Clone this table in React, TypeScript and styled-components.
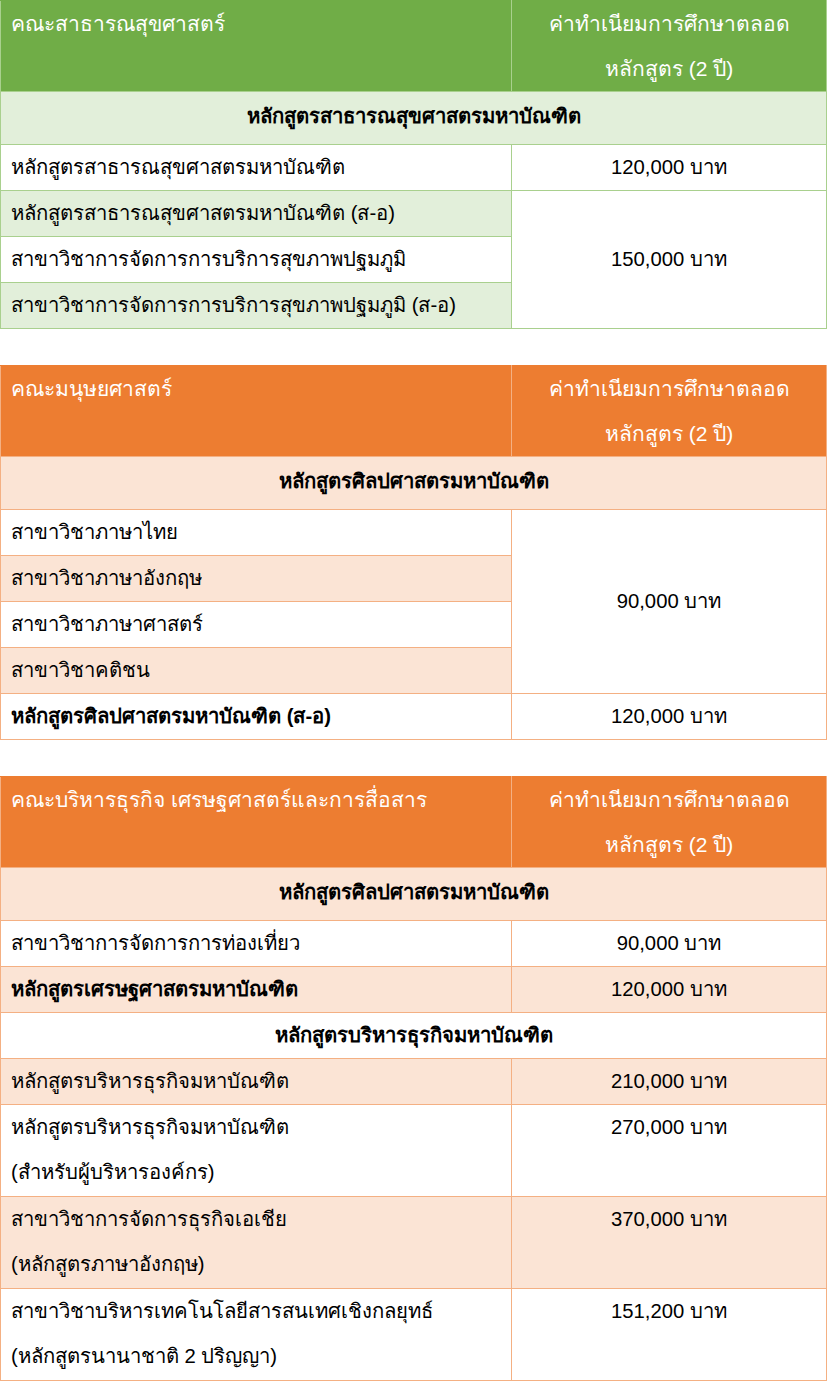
import React from 'react';
import styled, { createGlobalStyle, css } from 'styled-components';

type Tone = 'green' | 'orange';

const palettes: Record<Tone, { head: string; light: string; line: string }> = {
  green: { head: '#70AD47', light: '#E2EFDA', line: '#A9D08E' },
  orange: { head: '#ED7D31', light: '#FBE4D5', line: '#F4B083' },
};

const GlobalStyle = createGlobalStyle`
  body {
    margin: 0;
    background: #fff;
    font-family: Tahoma, "Liberation Sans", "Noto Sans", sans-serif;
    color: #000;
  }
`;

const Page = styled.div`
  width: 827px;
  display: flex;
  flex-direction: column;
  gap: 36px;
`;

const Table = styled.table`
  width: 100%;
  border-collapse: collapse;
  table-layout: fixed;
  font-size: 20.3px;
`;

const HeadCell = styled.th<{ $tone: Tone; $center?: boolean }>`
  background: ${(p) => palettes[p.$tone].head};
  color: #fff;
  font-weight: normal;
  font-size: 21px;
  text-align: ${(p) => (p.$center ? 'center' : 'left')};
  vertical-align: top;
  line-height: 45px;
  padding: 0 10px;
  border: 1px solid ${(p) => palettes[p.$tone].line};
  border-top-color: ${(p) => palettes[p.$tone].head};
`;

const GroupCell = styled.td<{ $tone: Tone; $shade?: boolean; $tall?: boolean }>`
  background: ${(p) => (p.$shade ? palettes[p.$tone].light : '#fff')};
  font-weight: bold;
  text-align: center;
  line-height: 45px;
  padding: ${(p) => (p.$tall ? '2px 10px 5px' : '0 10px')};
  border: 1px solid ${(p) => palettes[p.$tone].line};
`;

const Cell = styled.td<{
  $tone: Tone;
  $shade?: boolean;
  $bold?: boolean;
  $price?: boolean;
  $middle?: boolean;
  $double?: boolean;
}>`
  background: ${(p) => (p.$shade ? palettes[p.$tone].light : '#fff')};
  font-weight: ${(p) => (p.$bold ? 'bold' : 'normal')};
  line-height: 45px;
  padding: 0 10px ${(p) => (p.$double ? '1px' : '0')};
  vertical-align: ${(p) => (p.$middle ? 'middle' : 'top')};
  border: 1px solid ${(p) => palettes[p.$tone].line};
  ${(p) =>
    p.$price &&
    css`
      text-align: center;
    `}
`;

const FeeTable: React.FC<{ tone: Tone; faculty: string; children: React.ReactNode }> = ({
  tone,
  faculty,
  children,
}) => (
  <Table>
    <colgroup>
      <col style={{ width: 511 }} />
      <col />
    </colgroup>
    <thead>
      <tr>
        <HeadCell $tone={tone}>{faculty}</HeadCell>
        <HeadCell $tone={tone} $center>
          ค่าทำเนียมการศึกษาตลอด
          <br />
          หลักสูตร (2 ปี)
        </HeadCell>
      </tr>
    </thead>
    <tbody>{children}</tbody>
  </Table>
);

const App: React.FC = () => {
  return (
    <>
      <GlobalStyle />
      <Page>
        <FeeTable tone="green" faculty="คณะสาธารณสุขศาสตร์">
          <tr>
            <GroupCell $tone="green" $shade $tall colSpan={2}>
              หลักสูตรสาธารณสุขศาสตรมหาบัณฑิต
            </GroupCell>
          </tr>
          <tr>
            <Cell $tone="green">หลักสูตรสาธารณสุขศาสตรมหาบัณฑิต</Cell>
            <Cell $tone="green" $price>120,000 บาท</Cell>
          </tr>
          <tr>
            <Cell $tone="green" $shade>หลักสูตรสาธารณสุขศาสตรมหาบัณฑิต (ส-อ)</Cell>
            <Cell $tone="green" $price $middle rowSpan={3}>
              150,000 บาท
            </Cell>
          </tr>
          <tr>
            <Cell $tone="green">สาขาวิชาการจัดการการบริการสุขภาพปฐมภูมิ</Cell>
          </tr>
          <tr>
            <Cell $tone="green" $shade>สาขาวิชาการจัดการการบริการสุขภาพปฐมภูมิ (ส-อ)</Cell>
          </tr>
        </FeeTable>

        <FeeTable tone="orange" faculty="คณะมนุษยศาสตร์">
          <tr>
            <GroupCell $tone="orange" $shade $tall colSpan={2}>
              หลักสูตรศิลปศาสตรมหาบัณฑิต
            </GroupCell>
          </tr>
          <tr>
            <Cell $tone="orange">สาขาวิชาภาษาไทย</Cell>
            <Cell $tone="orange" $price $middle rowSpan={4}>
              90,000 บาท
            </Cell>
          </tr>
          <tr>
            <Cell $tone="orange" $shade>สาขาวิชาภาษาอังกฤษ</Cell>
          </tr>
          <tr>
            <Cell $tone="orange">สาขาวิชาภาษาศาสตร์</Cell>
          </tr>
          <tr>
            <Cell $tone="orange" $shade>สาขาวิชาคติชน</Cell>
          </tr>
          <tr>
            <Cell $tone="orange" $bold>หลักสูตรศิลปศาสตรมหาบัณฑิต (ส-อ)</Cell>
            <Cell $tone="orange" $price>120,000 บาท</Cell>
          </tr>
        </FeeTable>

        <FeeTable tone="orange" faculty="คณะบริหารธุรกิจ เศรษฐศาสตร์และการสื่อสาร">
          <tr>
            <GroupCell $tone="orange" $shade $tall colSpan={2}>
              หลักสูตรศิลปศาสตรมหาบัณฑิต
            </GroupCell>
          </tr>
          <tr>
            <Cell $tone="orange">สาขาวิชาการจัดการการท่องเที่ยว</Cell>
            <Cell $tone="orange" $price>90,000 บาท</Cell>
          </tr>
          <tr>
            <Cell $tone="orange" $shade $bold>หลักสูตรเศรษฐศาสตรมหาบัณฑิต</Cell>
            <Cell $tone="orange" $shade $price>120,000 บาท</Cell>
          </tr>
          <tr>
            <GroupCell $tone="orange" colSpan={2}>
              หลักสูตรบริหารธุรกิจมหาบัณฑิต
            </GroupCell>
          </tr>
          <tr>
            <Cell $tone="orange" $shade>หลักสูตรบริหารธุรกิจมหาบัณฑิต</Cell>
            <Cell $tone="orange" $shade $price>210,000 บาท</Cell>
          </tr>
          <tr>
            <Cell $tone="orange" $double>
              หลักสูตรบริหารธุรกิจมหาบัณฑิต
              <br />
              (สำหรับผู้บริหารองค์กร)
            </Cell>
            <Cell $tone="orange" $price>270,000 บาท</Cell>
          </tr>
          <tr>
            <Cell $tone="orange" $shade $double>
              สาขาวิชาการจัดการธุรกิจเอเชีย
              <br />
              (หลักสูตรภาษาอังกฤษ)
            </Cell>
            <Cell $tone="orange" $shade $price>370,000 บาท</Cell>
          </tr>
          <tr>
            <Cell $tone="orange" $double>
              สาขาวิชาบริหารเทคโนโลยีสารสนเทศเชิงกลยุทธ์
              <br />
              (หลักสูตรนานาชาติ 2 ปริญญา)
            </Cell>
            <Cell $tone="orange" $price>151,200 บาท</Cell>
          </tr>
        </FeeTable>
      </Page>
    </>
  );
};

export default App;
